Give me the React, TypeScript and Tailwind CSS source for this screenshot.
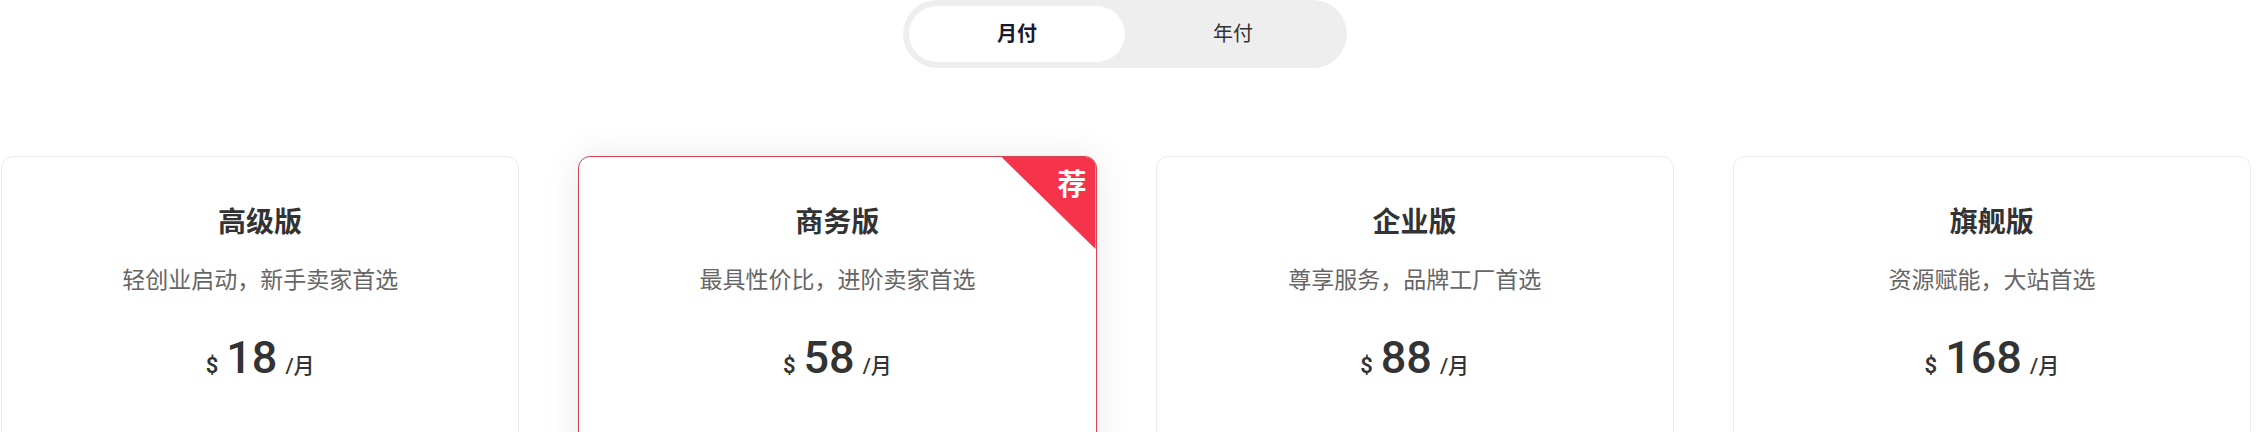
import { useState } from "react";

const plans = [
  { name: "高级版", desc: "轻创业启动，新手卖家首选", price: 18 },
  { name: "商务版", desc: "最具性价比，进阶卖家首选", price: 58, hot: true },
  { name: "企业版", desc: "尊享服务，品牌工厂首选", price: 88 },
  { name: "旗舰版", desc: "资源赋能，大站首选", price: 168 },
];

const font = "font-['Roboto','Noto_Sans_CJK_SC',sans-serif]";

export default function App() {
  const [yearly, setYearly] = useState(false);

  return (
    <main className={`${font} h-[432px] w-full overflow-hidden bg-white`}>
      <div className="flex justify-center">
        <div className="mr-[6px] flex h-[68px] w-[444px] rounded-full bg-[#eeeeee] p-[6px]">
          <button
            onClick={() => setYearly(false)}
            className={`flex-1 rounded-full text-[20px] ${!yearly ? "bg-white font-bold text-[#1a1a2e]" : "text-[#333]"}`}
          >
            月付
          </button>
          <button
            onClick={() => setYearly(true)}
            className={`flex-1 rounded-full text-[20px] ${yearly ? "bg-white font-bold text-[#1a1a2e]" : "text-[#333]"}`}
          >
            年付
          </button>
        </div>
      </div>

      <div className="ml-[1px] mt-[88px] grid w-[2250px] grid-cols-4 gap-[59px]">
        {plans.map((p) => (
          <div
            key={p.name}
            className={`relative h-[320px] overflow-hidden rounded-xl border bg-white text-center ${
              p.hot
                ? "border-[#d9434f] shadow-[0_0_36px_rgba(0,0,0,0.09)]"
                : "border-[#ececec]"
            }`}
          >
            {p.hot && (
              <div className="absolute right-0 top-0 h-[92px] w-[94px] bg-[#f5334a] [clip-path:polygon(0_0,100%_0,100%_100%)]">
                <span className="absolute right-[9px] top-[14px] text-[29px] font-bold leading-none text-white">荐</span>
              </div>
            )}
            <h3 className="pt-[46px] text-[28px] font-bold leading-[40px] text-[#333]">{p.name}</h3>
            <p className="mt-[22px] text-[23px] leading-[32px] text-[#666]">{p.desc}</p>
            <div className="mt-[38px] flex items-baseline justify-center text-[#333]">
              <span className="text-[22px] font-semibold">$</span>
              <span className="ml-2 text-[45px] font-medium leading-none">{yearly ? p.price * 10 : p.price}</span>
              <span className="ml-2 text-[21px] font-medium">/{yearly ? "年" : "月"}</span>
            </div>
          </div>
        ))}
      </div>
    </main>
  );
}
